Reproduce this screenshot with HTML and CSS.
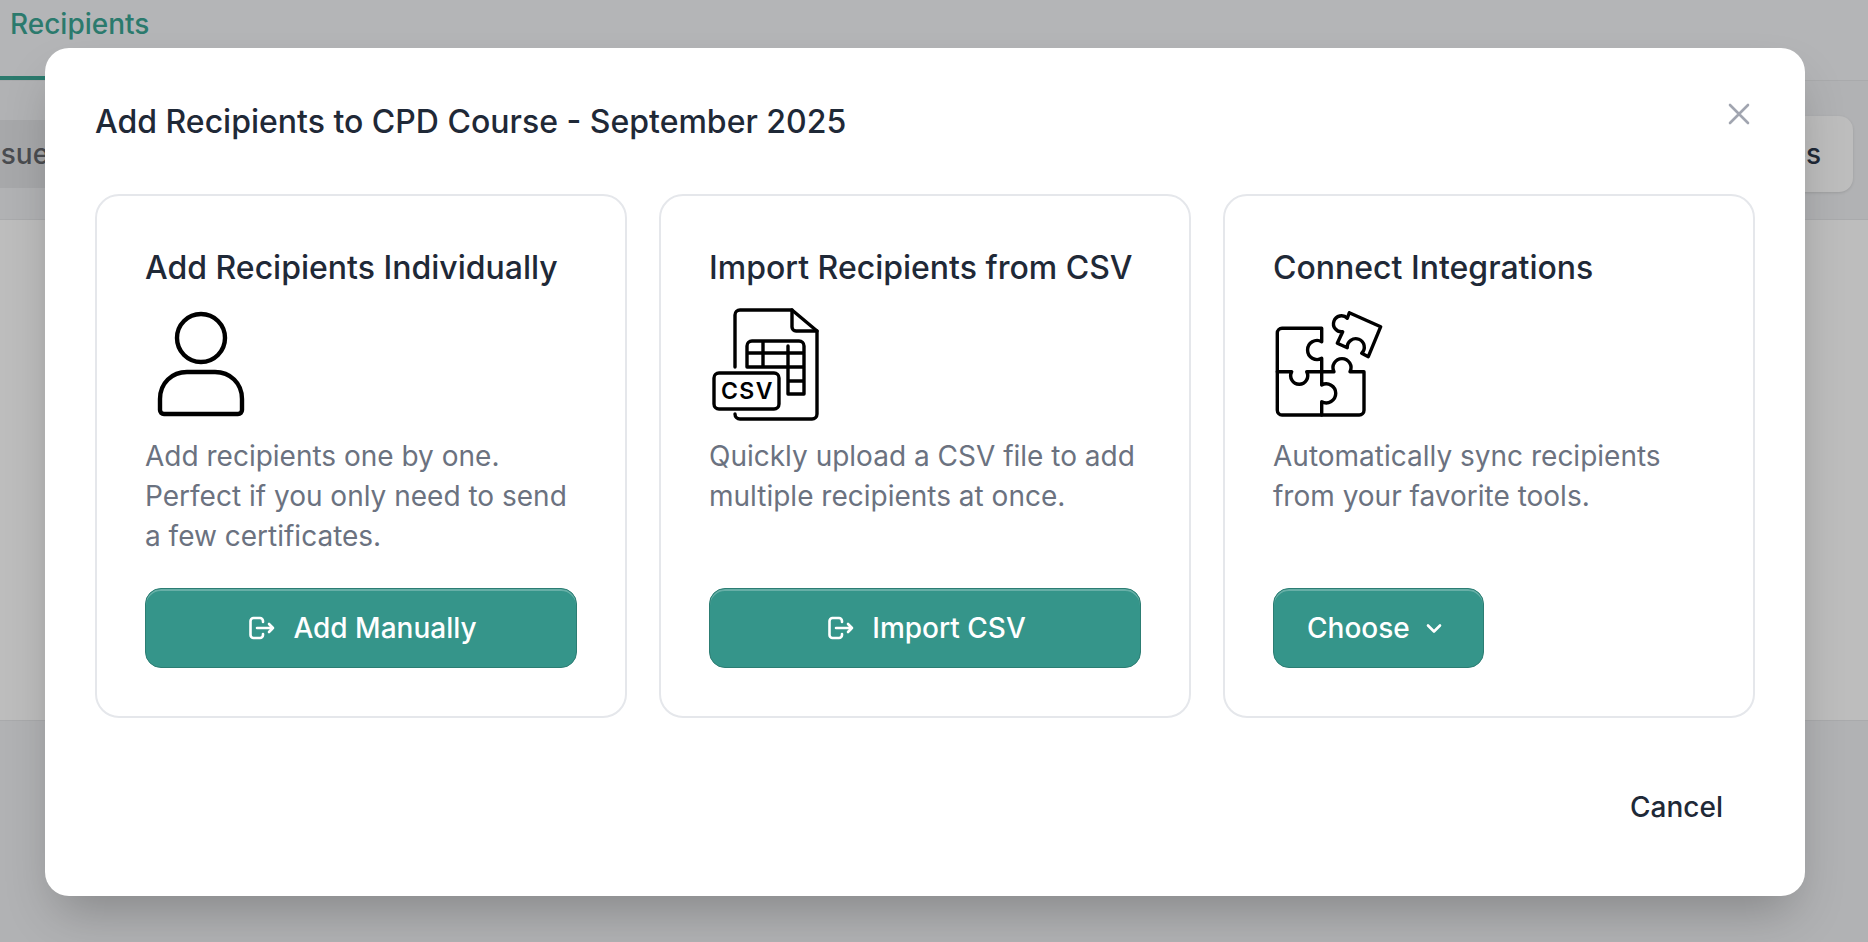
FILE: index.html
```html
<!DOCTYPE html>
<html lang="en">
<head>
    <meta charset="UTF-8">
    <meta name="viewport" content="width=device-width, initial-scale=1.0">
    <title>Add Recipients</title>
    <link rel="stylesheet" href="styles.css">
</head>
<body>
    <div class="page">
        <div class="tabs">
            <a href="javascript:;" class="tab">Recipients</a>
        </div>
        <div class="toolbar">
            <span class="filter">Issued</span>
            <a href="javascript:;" class="toolbar_btn">Issue Certificates</a>
        </div>
        <div class="content"></div>
    </div>

    <div class="modal">
        <h2 class="modal_title">Add Recipients to CPD Course - September 2025</h2>
        <a href="javascript:;" class="close">
            <svg width="24" height="24" viewBox="0 0 24 24" fill="none" stroke="currentColor" stroke-width="2.6" stroke-linecap="round">
                <path d="M3 3l18 18M21 3L3 21"/>
            </svg>
        </a>

        <div class="cards">
            <div class="card">
                <h3 class="card_title">Add Recipients Individually</h3>
                <svg class="card_icon" viewBox="0 0 120 120" fill="none" stroke="#000" stroke-width="4.4" stroke-linejoin="round">
                    <circle cx="56" cy="34" r="24"/>
                    <path d="M15 106V95C15 79 27 68 42 68H70C85 68 97 79 97 95V106a4 4 0 0 1-4 4H19a4 4 0 0 1-4-4Z"/>
                </svg>
                <p class="card_text">Add recipients one by one. Perfect if you only need to send a few certificates.</p>
                <a href="javascript:;" class="btn btn_wide">
                    <svg width="28" height="28" viewBox="0 0 28 28" fill="none" stroke="currentColor" stroke-width="2.6" stroke-linecap="round" stroke-linejoin="round">
                        <path d="M16 8V7a3 3 0 0 0-3-3H6.500a3 3 0 0 0-3 3v14a3 3 0 0 0 3 3H13a3 3 0 0 0 3-3v-1"/>
                        <path d="M10 14h16M22 10l4 4-4 4"/>
                    </svg>
                    Add Manually
                </a>
            </div>

            <div class="card">
                <h3 class="card_title">Import Recipients from CSV</h3>
                <svg class="card_icon" viewBox="0 0 120 120" fill="none" stroke="#000" stroke-width="3.4" stroke-linecap="round" stroke-linejoin="round">
                    <path d="M26 63V11a5 5 0 0 1 5-5H83L108 27V110a5 5 0 0 1-5 5H31a5 5 0 0 1-5-5"/>
                    <path d="M83 6V23a4 4 0 0 0 4 4H108"/>
                    <path d="M38 63V42a5 5 0 0 1 5-5H90a5 5 0 0 1 5 5V90H79V42M54 37V63M38 49H95M38 63H95M79 77H95"/>
                    <rect x="5" y="69" width="65" height="36" rx="5"/>
                    <text class="csv_label" x="38.500" y="95" text-anchor="middle">CSV</text>
                </svg>
                <p class="card_text">Quickly upload a CSV file to add multiple recipients at once.</p>
                <a href="javascript:;" class="btn btn_wide">
                    <svg width="28" height="28" viewBox="0 0 28 28" fill="none" stroke="currentColor" stroke-width="2.6" stroke-linecap="round" stroke-linejoin="round">
                        <path d="M16 8V7a3 3 0 0 0-3-3H6.500a3 3 0 0 0-3 3v14a3 3 0 0 0 3 3H13a3 3 0 0 0 3-3v-1"/>
                        <path d="M10 14h16M22 10l4 4-4 4"/>
                    </svg>
                    Import CSV
                </a>
            </div>

            <div class="card">
                <h3 class="card_title">Connect Integrations</h3>
                <svg class="card_icon" viewBox="0 0 120 120" fill="none" stroke="#000" stroke-width="3.4" stroke-linecap="round" stroke-linejoin="round">
                    <path d="M48.700 67.700V54.300A9.500 9.500 0 1 1 48.700 37.700V24.300H9a4.700 4.700 0 0 0-4.700 4.700V67.700"/>
                    <path d="M4.300 67.700V106.300a4.700 4.700 0 0 0 4.700 4.700H48.700V97.700A9.500 9.500 0 1 0 48.700 81V67.700H33.700A8.500 8.500 0 1 1 18.700 67.700Z"/>
                    <path d="M48.700 111H86.300a4.700 4.700 0 0 0 4.700-4.700V67.700H77A9 9 0 1 0 61 67.700H48.700"/>
                    <path d="M76.300 8.700L107.700 22.700L95.300 52.700L88.700 49.300A8.500 8.500 0 1 0 74.300 43.700L64.300 39.300L69.700 27.700A8 8 0 1 1 74.300 14.300Z"/>
                </svg>
                <p class="card_text">Automatically sync recipients from your favorite tools.</p>
                <a href="javascript:;" class="btn btn_choose">
                    Choose
                    <svg width="20" height="20" viewBox="0 0 20 20" fill="none" stroke="currentColor" stroke-width="2.600" stroke-linecap="round" stroke-linejoin="round">
                        <path d="M4 7.500l6 6 6-6"/>
                    </svg>
                </a>
            </div>
        </div>

        <div class="modal_footer">
            <a href="javascript:;" class="cancel">Cancel</a>
        </div>
    </div>
</body>
</html>
```

FILE: styles.css
```css
* {
    margin: 0;
    padding: 0;
    box-sizing: border-box;
}
a {
    text-decoration: none;
}
html, body {
    height: 100%;
    overflow: hidden;
}
body {
    font-family: Inter, "Liberation Sans", sans-serif;
    background: #b1b2b4;
    color: #1f2937;
}
.page {
    display: flex;
    flex-direction: column;
    height: 942px;
}
.tabs {
    height: 81px;
    background: #b4b5b7;
    border-bottom: 1px solid #a9aaac;
}
.tab {
    display: inline-block;
    height: 80px;
    width: 180px;
    padding: 9px 0 0 10px;
    font-size: 28px;
    line-height: 30px;
    font-weight: 500;
    color: #2b7a6d;
    border-bottom: 4px solid #2b7a6d;
}
.toolbar {
    display: flex;
    align-items: center;
    justify-content: space-between;
    height: 139px;
    padding: 8px 15px 0 0;
    background: #b1b2b4;
    border-bottom: 1px solid #a9aaac;
}
.filter {
    display: flex;
    align-items: center;
    width: 150px;
    height: 68px;
    margin-left: -22px;
    background: #a7a8aa;
    color: #4a4c50;
    font-size: 28px;
    font-weight: 500;
}
.toolbar_btn {
    display: flex;
    align-items: center;
    height: 76px;
    padding: 0 32px;
    background: #bdbdbd;
    border-radius: 14px;
    color: #1f2937;
    font-size: 28px;
    font-weight: 500;
    box-shadow: 0 1px 3px rgba(0,0,0,0.12);
}
.content {
    height: 501px;
    background: #bdbdbd;
    border-bottom: 1px solid #a9aaac;
}
.modal {
    position: absolute;
    left: 45px;
    top: 48px;
    width: 1760px;
    height: 848px;
    padding: 50px;
    background: #fff;
    border-radius: 24px;
    box-shadow: 0 25px 50px -12px rgba(0,0,0,0.25);
}
.modal_title {
    height: 45px;
    margin-bottom: 51px;
    font-size: 32px;
    line-height: 47px;
    font-weight: 500;
}
.close {
    position: absolute;
    right: 54px;
    top: 54px;
    color: #a1a5b0;
}
.cards {
    display: grid;
    grid-template-columns: repeat(3, 1fr);
    gap: 32px;
}
.card {
    display: flex;
    flex-direction: column;
    align-items: flex-start;
    height: 524px;
    padding: 48px;
    border: 2px solid #e5e7eb;
    border-radius: 24px;
}
.card_title {
    height: 45px;
    font-size: 32px;
    line-height: 47px;
    font-weight: 500;
    color: #1f2937;
}
.card_icon {
    width: 120px;
    height: 120px;
    margin-top: 15px;
}
.csv_label {
    font-family: Inter, sans-serif;
    font-size: 23px;
    font-weight: 600;
    letter-spacing: 1.5px;
    fill: #000;
    stroke: none;
}
.card_text {
    flex: 1;
    margin-top: 12px;
    font-size: 28px;
    line-height: 40px;
    color: #6b7280;
}
.btn {
    display: flex;
    align-items: center;
    justify-content: center;
    gap: 18px;
    height: 80px;
    padding-left: 2px;
    background: #35958a;
    border: 1px solid #2c7d73;
    border-radius: 16px;
    box-shadow: inset 0 2px 0 rgba(255,255,255,0.25);
    color: #fff;
    font-size: 28px;
    font-weight: 500;
}
.btn_wide {
    width: 100%;
}
.btn_choose {
    gap: 14px;
    padding: 0 39px 0 33px;
}
.modal_footer {
    display: flex;
    justify-content: flex-end;
    margin-top: 49px;
}
.cancel {
    display: flex;
    align-items: center;
    height: 80px;
    padding: 0 32px;
    font-size: 28px;
    font-weight: 500;
    color: #1f2937;
}
```
